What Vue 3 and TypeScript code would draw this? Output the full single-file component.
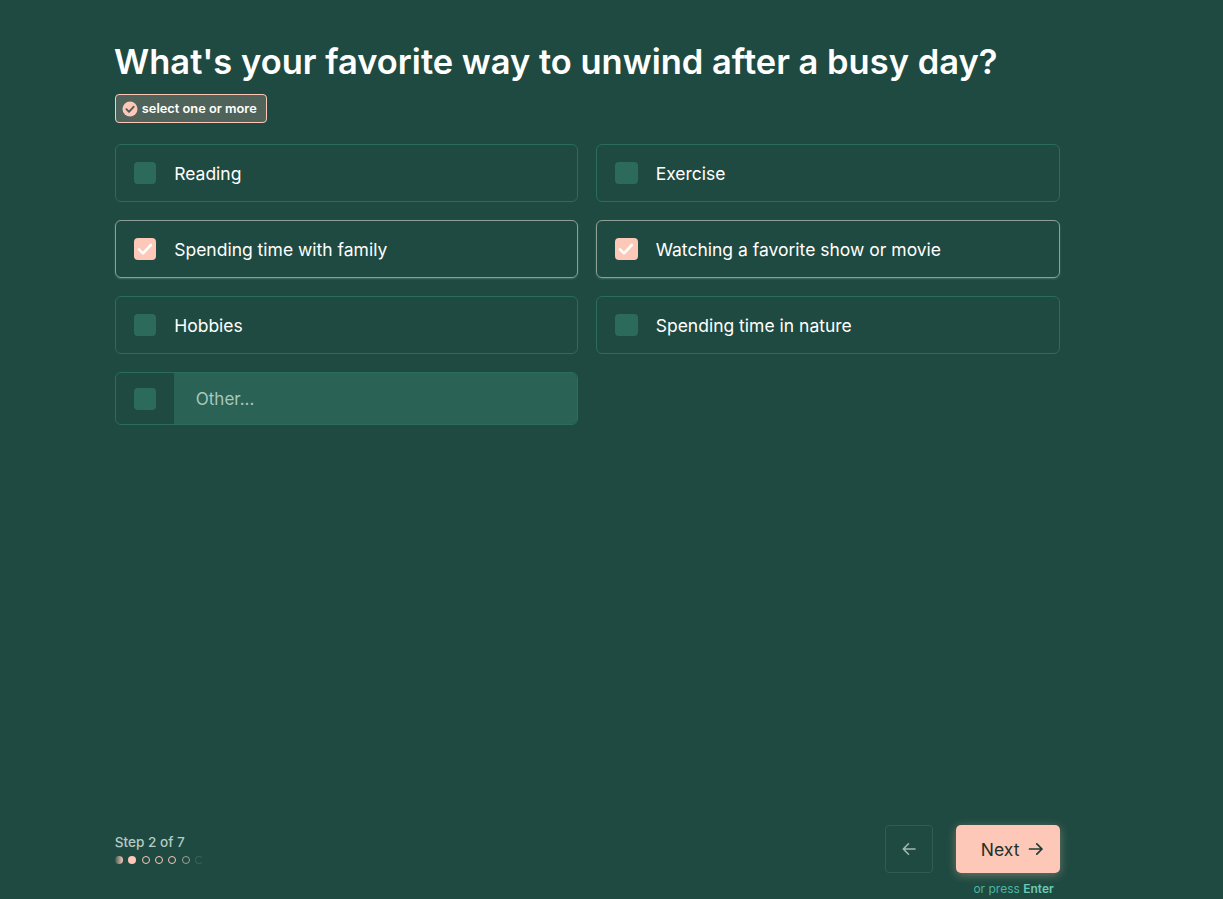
<script setup lang="ts">
interface Option { label: string; checked: boolean }
const options: Option[] = [
  { label: 'Reading', checked: false },
  { label: 'Exercise', checked: false },
  { label: 'Spending time with family', checked: true },
  { label: 'Watching a favorite show or movie', checked: true },
  { label: 'Hobbies', checked: false },
  { label: 'Spending time in nature', checked: false },
]
const dots = ['fade', 'fill', 'ring', 'ring', 'ring', 'dim', 'faint']
</script>

<template>
  <main class="page">
    <section class="content">
      <h1 class="title">What's your favorite way to unwind after a busy day?</h1>
      <div class="hint">
        <svg class="hint-icon" viewBox="0 0 16 16" width="16" height="16">
          <circle cx="8" cy="8" r="7.5" fill="#fec8b8" />
          <path d="M4.4 8.2 7 10.8 11.6 5.8" fill="none" stroke="#4f5f57" stroke-width="1.9" stroke-linecap="round" stroke-linejoin="round" />
        </svg>
        <span>select one or more</span>
      </div>
      <div class="grid">
        <div v-for="o in options" :key="o.label" class="option" :class="{ selected: o.checked }">
          <span class="box" :class="{ on: o.checked }">
            <svg v-if="o.checked" viewBox="0 0 22 22" width="22" height="22">
              <path d="M5 11.4 9 15.4 16.8 7" fill="none" stroke="#fff" stroke-width="2.6" stroke-linecap="round" stroke-linejoin="round" />
            </svg>
          </span>
          <span class="label">{{ o.label }}</span>
        </div>
        <div class="option other">
          <span class="other-check"><span class="box"></span></span>
          <span class="other-input">Other...</span>
        </div>
      </div>
    </section>
    <footer class="footer">
      <div class="progress">
        <div class="step">Step 2 of 7</div>
        <div class="dots">
          <span v-for="(d, i) in dots" :key="i" class="dot" :class="d"></span>
        </div>
      </div>
      <div class="nav">
        <div class="buttons">
          <button class="back" type="button" aria-label="Back">
            <svg viewBox="0 0 16 16" width="16" height="16">
              <path d="M14 8H2.5M7.5 2.8 2.3 8l5.2 5.2" fill="none" stroke="#a3b8b0" stroke-width="1.6" stroke-linecap="round" stroke-linejoin="round" />
            </svg>
          </button>
          <button class="next" type="button">
            <span>Next</span>
            <svg viewBox="0 0 16 16" width="16" height="16">
              <path d="M1.5 8H14M8.8 2.8 14 8l-5.2 5.2" fill="none" stroke="#1f3a33" stroke-width="1.7" stroke-linecap="round" stroke-linejoin="round" />
            </svg>
          </button>
        </div>
        <div class="press">or press <b>Enter</b></div>
      </div>
    </footer>
  </main>
</template>

<style>
html, body { margin: 0; background: #1f4a41; }
</style>

<style scoped>
.page {
  box-sizing: border-box;
  height: 899px;
  overflow: hidden;
  padding: 40px 163px 2px 114.8px;
  background: #1f4a41;
  display: flex;
  flex-direction: column;
  font-family: Inter, "Noto Sans", sans-serif;
  color: #fff;
}
.content { flex: 1; }
.title {
  margin: 0 0 0 -0.8px;
  font-size: 34.5px;
  line-height: 44px;
  font-weight: 600;
  white-space: nowrap;
}
.hint {
  margin-top: 10px;
  box-sizing: border-box;
  width: 152px;
  height: 29px;
  display: flex;
  align-items: center;
  gap: 4px;
  padding-left: 6px;
  border: 1px solid #fec8b8;
  border-radius: 4px;
  background: #4f635a;
  font-size: 12.8px;
  font-weight: 600;
  white-space: nowrap;
}
.hint-icon { flex: none; }
.grid {
  margin-top: 21px;
  display: grid;
  grid-template-columns: 1fr 1fr;
  gap: 18px;
  width: 945px;
}
.option {
  box-sizing: border-box;
  height: 58px;
  display: flex;
  align-items: center;
  gap: 18px;
  padding-left: 18px;
  border: 1px solid #2b6c5c;
  border-radius: 6px;
}
.selected { border-color: #8f9f94; box-shadow: 0 1px 2px rgba(120, 190, 165, 0.35); }
.box {
  flex: none;
  width: 22.4px;
  height: 22px;
  border-radius: 4px;
  background: #2c6b5c;
  display: block;
}
.box.on { background: #fec8b8; }
.label { font-size: 17.5px; line-height: 22px; padding-top: 1px; font-weight: 400; white-space: nowrap; }
.other { height: 53px; padding-left: 0; gap: 0; overflow: hidden; }
.other-check {
  flex: none;
  width: 58px;
  box-sizing: border-box;
  padding-left: 18px;
}
.other-input {
  flex: 1;
  align-self: stretch;
  display: flex;
  align-items: center;
  padding-left: 22px;
  background: #2a6256;
  color: #a9c7bd;
  font-size: 17px;
}
.footer {
  display: flex;
  justify-content: space-between;
  align-items: flex-start;
  width: 945px;
}
.progress { margin-top: 8px; }
.step { font-size: 13.6px; line-height: 18px; font-weight: 500; color: #b4cbc3; }
.dots { display: flex; gap: 5.4px; margin-top: 5px; }
.dot { box-sizing: border-box; width: 8px; height: 8px; border-radius: 50%; }
.fade { background: linear-gradient(90deg, #3a5c52, #fec8b8); }
.fill { background: #fec8b8; }
.ring { border: 1px solid #fec8b8; }
.dim { border: 1px solid #a39f92; }
.faint { border: 1px solid #3d6156; border-right-color: transparent; }
.nav { display: flex; flex-direction: column; align-items: flex-end; }
.buttons { display: flex; gap: 23px; }
button { margin: 0; padding: 0; font: inherit; cursor: pointer; }
.back {
  box-sizing: border-box;
  width: 48px;
  height: 48px;
  background: transparent;
  border: 1px solid #2f5d52;
  border-radius: 4px;
  display: flex;
  align-items: center;
  justify-content: center;
}
.next {
  box-sizing: border-box;
  width: 104px;
  height: 48px;
  padding-left: 25px;
  background: #fec8b8;
  border: 0;
  border-radius: 5px;
  color: #1f2f2a;
  font-size: 17.5px;
  display: flex;
  align-items: center;
  gap: 9px;
  box-shadow: 0 2px 10px rgba(255, 201, 185, 0.35);
}
.press {
  margin-top: 8px;
  margin-right: 6px;
  font-size: 12px;
  line-height: 16px;
  color: #4cb5a0;
}
.press b { font-weight: 600; color: #6cc9b4; }
</style>
